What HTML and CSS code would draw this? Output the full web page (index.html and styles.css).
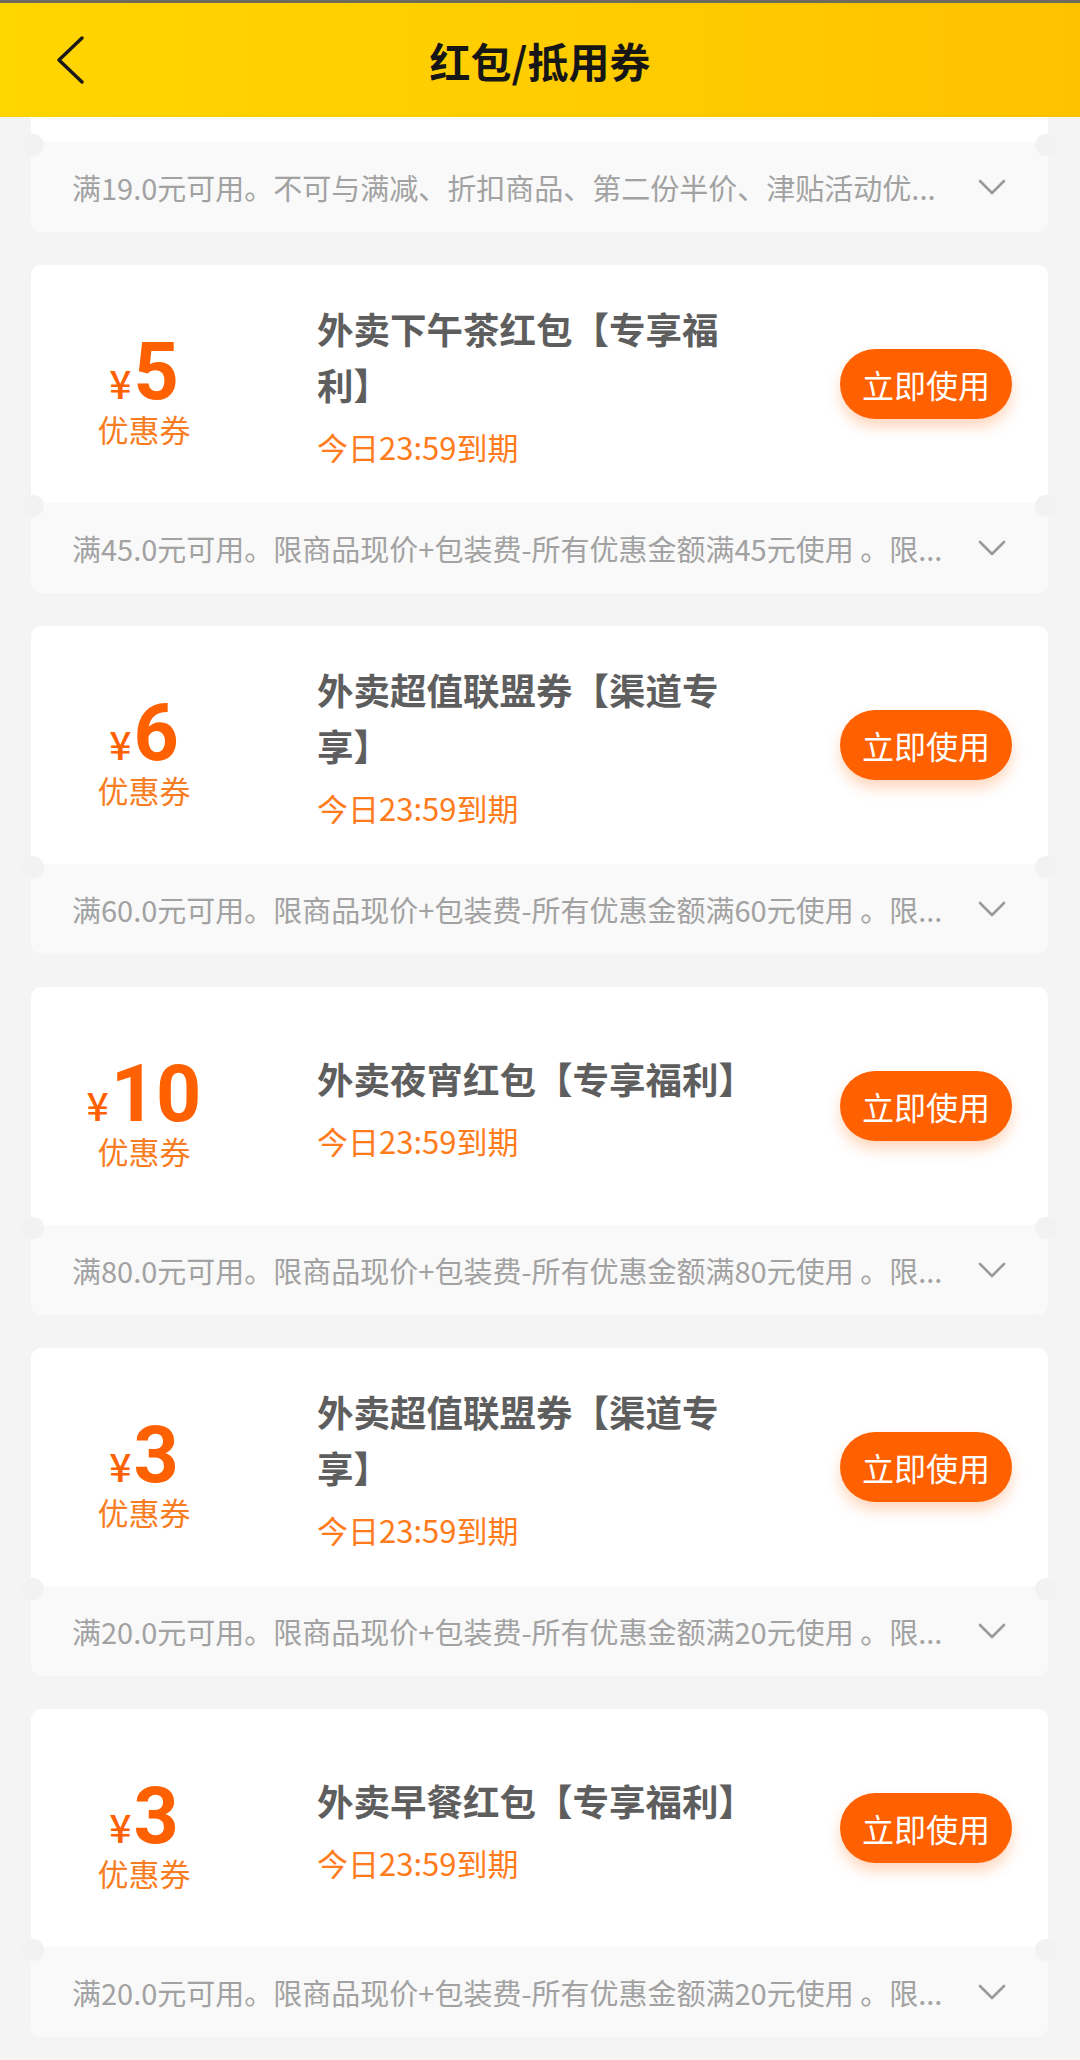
FILE: index.html
```html
<!DOCTYPE html>
<html lang="zh-CN">
<head>
<meta charset="utf-8">
<title>红包/抵用券</title>
<link rel="stylesheet" href="styles.css">
</head>
<body>
<div class="app">
  <header class="topbar">
    <div class="topbar-left">
      <svg class="back" width="32" height="48" viewBox="0 0 32 48"><path d="M26 2 L3 24 L26 46" fill="none" stroke="#1a1a1a" stroke-width="3.4" stroke-linecap="round" stroke-linejoin="round"/></svg>
    </div>
    <h1 class="topbar-title">红包/抵用券</h1>
    <div></div>
  </header>

  <main class="list">
    <section class="coupon">
      <div class="coupon-main coupon-main--clipped"></div>
      <div class="coupon-rule">
        <p class="rule-text">满19.0元可用。不可与满减、折扣商品、第二份半价、津贴活动优...</p>
        <svg class="chev" width="28" height="16" viewBox="0 0 28 16"><path d="M2 2 L14 14 L26 2" fill="none" stroke="#9a9a9a" stroke-width="2.6" stroke-linecap="round" stroke-linejoin="round"/></svg>
      </div>
    </section>

    <section class="coupon">
      <div class="coupon-main">
        <div class="amount">
          <div class="amount-value"><span class="yen">¥</span><span class="num">5</span></div>
          <div class="amount-label">优惠券</div>
        </div>
        <div class="info">
          <div class="info-title">外卖下午茶红包【专享福利】</div>
          <div class="info-expire">今日23:59到期</div>
        </div>
        <button class="use-btn">立即使用</button>
      </div>
      <div class="coupon-rule">
        <p class="rule-text">满45.0元可用。限商品现价+包装费-所有优惠金额满45元使用 。限...</p>
        <svg class="chev" width="28" height="16" viewBox="0 0 28 16"><path d="M2 2 L14 14 L26 2" fill="none" stroke="#9a9a9a" stroke-width="2.6" stroke-linecap="round" stroke-linejoin="round"/></svg>
      </div>
    </section>

    <section class="coupon">
      <div class="coupon-main">
        <div class="amount">
          <div class="amount-value"><span class="yen">¥</span><span class="num">6</span></div>
          <div class="amount-label">优惠券</div>
        </div>
        <div class="info">
          <div class="info-title">外卖超值联盟券【渠道专享】</div>
          <div class="info-expire">今日23:59到期</div>
        </div>
        <button class="use-btn">立即使用</button>
      </div>
      <div class="coupon-rule">
        <p class="rule-text">满60.0元可用。限商品现价+包装费-所有优惠金额满60元使用 。限...</p>
        <svg class="chev" width="28" height="16" viewBox="0 0 28 16"><path d="M2 2 L14 14 L26 2" fill="none" stroke="#9a9a9a" stroke-width="2.6" stroke-linecap="round" stroke-linejoin="round"/></svg>
      </div>
    </section>

    <section class="coupon">
      <div class="coupon-main">
        <div class="amount">
          <div class="amount-value"><span class="yen">¥</span><span class="num">10</span></div>
          <div class="amount-label">优惠券</div>
        </div>
        <div class="info">
          <div class="info-title">外卖夜宵红包【专享福利】</div>
          <div class="info-expire">今日23:59到期</div>
        </div>
        <button class="use-btn">立即使用</button>
      </div>
      <div class="coupon-rule">
        <p class="rule-text">满80.0元可用。限商品现价+包装费-所有优惠金额满80元使用 。限...</p>
        <svg class="chev" width="28" height="16" viewBox="0 0 28 16"><path d="M2 2 L14 14 L26 2" fill="none" stroke="#9a9a9a" stroke-width="2.6" stroke-linecap="round" stroke-linejoin="round"/></svg>
      </div>
    </section>

    <section class="coupon">
      <div class="coupon-main">
        <div class="amount">
          <div class="amount-value"><span class="yen">¥</span><span class="num">3</span></div>
          <div class="amount-label">优惠券</div>
        </div>
        <div class="info">
          <div class="info-title">外卖超值联盟券【渠道专享】</div>
          <div class="info-expire">今日23:59到期</div>
        </div>
        <button class="use-btn">立即使用</button>
      </div>
      <div class="coupon-rule">
        <p class="rule-text">满20.0元可用。限商品现价+包装费-所有优惠金额满20元使用 。限...</p>
        <svg class="chev" width="28" height="16" viewBox="0 0 28 16"><path d="M2 2 L14 14 L26 2" fill="none" stroke="#9a9a9a" stroke-width="2.6" stroke-linecap="round" stroke-linejoin="round"/></svg>
      </div>
    </section>

    <section class="coupon">
      <div class="coupon-main">
        <div class="amount">
          <div class="amount-value"><span class="yen">¥</span><span class="num">3</span></div>
          <div class="amount-label">优惠券</div>
        </div>
        <div class="info">
          <div class="info-title">外卖早餐红包【专享福利】</div>
          <div class="info-expire">今日23:59到期</div>
        </div>
        <button class="use-btn">立即使用</button>
      </div>
      <div class="coupon-rule">
        <p class="rule-text">满20.0元可用。限商品现价+包装费-所有优惠金额满20元使用 。限...</p>
        <svg class="chev" width="28" height="16" viewBox="0 0 28 16"><path d="M2 2 L14 14 L26 2" fill="none" stroke="#9a9a9a" stroke-width="2.6" stroke-linecap="round" stroke-linejoin="round"/></svg>
      </div>
    </section>
  </main>
</div>
</body>
</html>
```

FILE: styles.css
```css
html, body {
  margin: 0;
  padding: 0;
}
body {
  background: #f4f4f4;
  font-family: "Noto Sans CJK SC", "Noto Sans", sans-serif;
  width: 1080px;
  height: 2060px;
  overflow: hidden;
}
.app {
  display: flex;
  flex-direction: column;
}
.topbar {
  box-sizing: border-box;
  height: 117px;
  border-top: 3px solid #6e6a5e;
  background: linear-gradient(90deg, #ffd500 0%, #ffcc00 55%, #ffc200 100%);
  display: grid;
  grid-template-columns: 1fr auto 1fr;
  align-items: center;
}
.topbar-left {
  display: flex;
  align-items: center;
  padding-left: 56px;
}
.back {
  display: block;
}
.topbar-title {
  margin: 0;
  font-size: 41px;
  font-weight: 700;
  color: #161616;
  line-height: 1;
}
.list {
  display: flex;
  flex-direction: column;
  gap: 33px;
  padding: 0 32px 0 31px;
}
.coupon {
  display: flex;
  flex-direction: column;
}
.coupon-main {
  height: 238px;
  background: #fff;
  border-radius: 10px 10px 0 0;
  display: flex;
  align-items: center;
}
.coupon-main--clipped {
  height: 25px;
  border-radius: 0;
}
.amount {
  width: 226px;
  flex: none;
  display: flex;
  flex-direction: column;
  align-items: center;
  padding-top: 12px;
}
.amount-value {
  display: flex;
  align-items: baseline;
  color: #ff6000;
  line-height: 1;
}
.yen {
  font-size: 39px;
  font-weight: 500;
  margin-right: 2px;
}
.num {
  font-family: Roboto, "Liberation Sans", sans-serif;
  font-size: 79px;
  font-weight: 700;
  line-height: 78px;
}
.amount-label {
  margin-top: 0;
  font-size: 31px;
  line-height: 36px;
  color: #f87d22;
}
.info {
  width: 446px;
  margin-left: 60px;
  flex: none;
}
.info-title {
  font-size: 36.5px;
  font-weight: 700;
  line-height: 56px;
  color: #5e5e5e;
}
.info-expire {
  margin-top: 14px;
  font-size: 31px;
  line-height: 40px;
  color: #ff7b1c;
}
.use-btn {
  margin-left: auto;
  margin-right: 36px;
  width: 172px;
  height: 70px;
  border: none;
  border-radius: 35px;
  background: #ff6000;
  color: #fff;
  font-family: "Noto Sans CJK SC", "Noto Sans", sans-serif;
  font-size: 32px;
  padding: 0;
  box-shadow: 0 8px 14px rgba(255, 110, 20, 0.28);
}
.coupon-rule {
  position: relative;
  height: 90px;
  box-sizing: border-box;
  background: #f9f9f9;
  border-radius: 0 0 10px 10px;
  display: flex;
  align-items: center;
  padding: 0 42px 0 41px;
}
.coupon-rule::before,
.coupon-rule::after {
  content: "";
  position: absolute;
  top: -8px;
  width: 22px;
  height: 22px;
  border-radius: 50%;
  background: #f2f2f2;
}
.coupon-rule::before {
  left: -9px;
}
.coupon-rule::after {
  right: -9px;
}
.rule-text {
  flex: 1;
  min-width: 0;
  margin: 0;
  font-size: 29px;
  line-height: 40px;
  color: #a2a2a2;
  white-space: nowrap;
  overflow: hidden;
}
.chev {
  flex: none;
  margin-left: 28px;
  display: block;
}
```
